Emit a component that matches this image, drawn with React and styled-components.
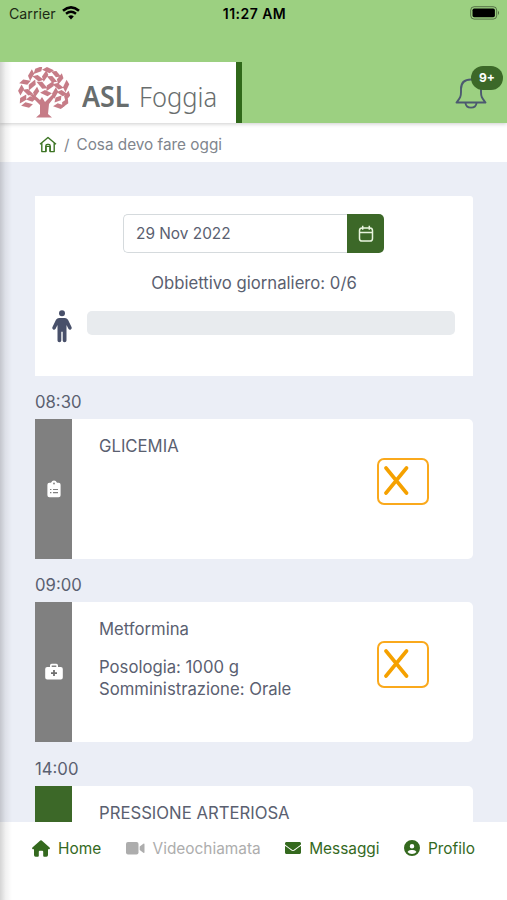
import React from "react";
import styled, { createGlobalStyle } from "styled-components";
import { FaEnvelope } from "react-icons/fa";
import { FaCircleUser } from "react-icons/fa6";

const tasks = [
  { time: "08:30", title: "GLICEMIA", icon: "clipboard", color: "#808080" },
  {
    time: "09:00",
    title: "Metformina",
    icon: "medical",
    color: "#808080",
    details: ["Posologia: 1000 g", "Somministrazione: Orale"],
  },
  { time: "14:00", title: "PRESSIONE ARTERIOSA", color: "#3c6828" },
];

// each leaf: x, y, rotation and length
const leaves = [
  [20, 3, -20, 11], [30, 3, 25, 11], [38, 7, 50, 10], [13, 8, -60, 11],
  [20, 11, 40, 11], [27, 9, -55, 11], [34, 12, 50, 11], [42, 12, -50, 11],
  [7, 15, 10, 11], [14, 18, -40, 12], [24, 18, 50, 12], [32, 19, -35, 12],
  [40, 19, 40, 11], [48, 19, -65, 12], [3, 23, -60, 10], [10, 25, 45, 11],
  [18, 25, -55, 10], [28, 26, 25, 11], [37, 26, -60, 11], [44, 26, 35, 10],
  [49, 29, -50, 10], [5, 32, -30, 10], [13, 32, 20, 9], [40, 32, -20, 9],
  [47, 36, -35, 10], [9, 38, 15, 11], [41, 39, 20, 11],
];

const Tree = () => (
  <svg width="52" height="51" viewBox="0 0 52 51" fill="#c67c87">
    {leaves.map(([x, y, angle, size], i) => (
      <path
        key={i}
        transform={`translate(${x} ${y}) rotate(${angle})`}
        d={`M${-size / 2} 2.2L${-size / 5} -2.2H${size / 2}L${size / 4} 2.2Z`}
      />
    ))}
    <path d="M18 50.5l4-3.5V38L12 28l3-1 7 6 2-3 3 5 8-8 3 1-7 9-1 10 4 3.5Z" />
  </svg>
);

const Wifi = () => (
  <svg width="18" height="14" viewBox="0 0 18 14" fill="none" stroke="#000">
    <path d="M1 4.8Q9-2.1 17 4.8" strokeWidth="2.6" />
    <path d="M4 7.8Q9 3.7 14 7.8" strokeWidth="2.4" />
    <path d="M9 13.5L6.2 10.5Q9 8.2 11.8 10.5Z" fill="#000" stroke="none" />
  </svg>
);

const Battery = () => (
  <svg width="30" height="14" viewBox="0 0 30 14">
    <rect x=".7" y=".7" width="26" height="12.4" rx="3.5" fill="none" stroke="#000" strokeOpacity=".45" />
    <rect x="2.5" y="2.5" width="22.4" height="8.8" rx="1.7" />
    <path d="M28 4.7q2 2 0 4.4Z" fillOpacity=".5" />
  </svg>
);

const Bell = () => (
  <svg width="32" height="32" viewBox="0 0 32 32" fill="none" stroke="#4c5970" strokeWidth="1.9">
    <path d="M1.5 25.5C5 21 6 20 6 15v-3C6 6 9.5 2.5 16 2.5S26 6 26 12v3c0 5 1 6 4.5 10.5Z" strokeLinejoin="round" />
    <path d="M10.5 26c.6 6.2 10.4 6.2 11 0" />
  </svg>
);

const HouseOutline = () => (
  <svg width="18" height="17" viewBox="0 0 18 17" fill="none" stroke="#3c7424" strokeWidth="1.4">
    <path d="M1 8.3L9 1.5l8 6.8M2.8 7v8.6h4.1v-5.2h4.2v5.2h4.1V7" strokeLinejoin="round" />
    <path d="M6.9 15.6V9.7q0-1.3 1.3-1.3h1.6q1.3 0 1.3 1.3v5.9" />
  </svg>
);

const Calendar = () => (
  <svg width="16" height="18" viewBox="0 0 16 18" fill="none" stroke="#e9f5df" strokeWidth="1.5">
    <rect x="1.5" y="3" width="13" height="13" rx="2.6" />
    <path d="M1.5 7.6h13M4.7 .8v4M11.3 .8v4" />
  </svg>
);

const Person = () => (
  <svg width="20" height="33" viewBox="0 0 20 33" fill="#48506a">
    <circle cx="10" cy="3.2" r="3" />
    <path d="M7 8h6q1.8 0 3 1.8l3.5 7.3q.7 1.700-.7 2.400-1.500.6-2.400-.8L14.500 15v15.600q0 1.700-1.900 1.700t-1.900-1.700V21.800H9.300v8.800q0 1.700-1.900 1.700t-1.900-1.700V15l-1.900 3.700q-.9 1.400-2.400.8-1.400-.7-.7-2.400L4 9.800Q5.200 8 7 8Z" />
  </svg>
);

const Clipboard = () => (
  <svg width="14" height="18" viewBox="0 0 14 18">
    <path d="M2.4 2.7H4Q5 .4 7 .4t3 2.3h1.6Q13.6 2.7 13.6 4.7v10.6q0 2-2 2H2.4q-2 0-2-2V4.7q0-2 2-2Z" fill="#fff" />
    <circle cx="7" cy="3.5" r=".9" fill="#808080" />
    <path d="M3 9.5h1.4M6 9.5h5M3 12.7h1.4M6 12.7h5" stroke="#808080" strokeWidth="1.2" />
  </svg>
);

const MedicalBag = () => (
  <svg width="18" height="18" viewBox="0 0 18 18">
    <path d="M5 4V2.4Q5 .7 6.7.7h4.6Q13 .7 13 2.4V4h2.8q2 0 2 2v8.5q0 2-2 2H2.2q-2 0-2-2V6q0-2 2-2ZM6.7 4h4.6V2.4H6.7Z" fill="#fff" fillRule="evenodd" />
    <path d="M9 7.1v6M6 10.1h6" stroke="#707070" strokeWidth="1.8" />
  </svg>
);

const Cross = () => (
  <svg width="25" height="29" viewBox="0 0 25 29" fill="none" stroke="#f5a100" strokeWidth="3.6" strokeLinecap="round">
    <path d="M2 2l20.5 25M22.5 2L2 27" />
  </svg>
);

const House = () => (
  <svg width="18" height="17" viewBox="0 0 18 17" fill="currentColor">
    <path d="M8.3.6q.7-.6 1.4 0l7.9 7q.8 1.3-.6 1.6h-1v5.9q0 1.6-1.6 1.6h-2.3q-.9 0-.9-.9v-4.1q0-.9-.9-.9H7.7q-.9 0-.9.9v4.1q0 .9-.9.9H3.6Q2 16.7 2 15.1V9.2H1Q-.4 8.9.4 7.6Z" />
  </svg>
);

const Camera = () => (
  <svg width="19" height="13" viewBox="0 0 19 13" fill="currentColor">
    <rect width="12.5" height="12.5" rx="2" />
    <path d="M13.7 4.5l3.6-2.8q1.2-.6 1.2.7v7.7q0 1.3-1.2.7l-3.6-2.8Z" />
  </svg>
);

const App = () => {
  return (
    <Wrapper>
      <GlobalStyle />
      <Header>
        <StatusBar>
          <Carrier>
            Carrier <Wifi />
          </Carrier>
          <Clock>11:27 AM</Clock>
          <Power>
            <Battery />
          </Power>
        </StatusBar>
        <TopBar>
          <Logo>
            <Tree />
            <Brand>
              <BrandBold>ASL</BrandBold>
              <BrandLight>Foggia</BrandLight>
            </Brand>
          </Logo>
          <Notifications>
            <Bell />
            <Badge>9+</Badge>
          </Notifications>
        </TopBar>
      </Header>
      <Breadcrumb>
        <HouseOutline />
        <span>/</span>
        <span>Cosa devo fare oggi</span>
      </Breadcrumb>
      <Main>
        <Summary>
          <DatePicker>
            <DateValue>29 Nov 2022</DateValue>
            <DateButton>
              <Calendar />
            </DateButton>
          </DatePicker>
          <Goal>Obbiettivo giornaliero: 0/6</Goal>
          <ProgressRow>
            <Person />
            <Progress />
          </ProgressRow>
        </Summary>
        {tasks.map(({ time, title, icon, color, details }) => (
          <Task key={time}>
            <Time>{time}</Time>
            <Card>
              <Stripe $color={color}>
                {icon === "clipboard" && <Clipboard />}
                {icon === "medical" && <MedicalBag />}
              </Stripe>
              <Info>
                <div>{title}</div>
                {details && (
                  <Details>
                    {details.map((line) => (
                      <div key={line}>{line}</div>
                    ))}
                  </Details>
                )}
              </Info>
              <CheckBox>
                <Cross />
              </CheckBox>
            </Card>
          </Task>
        ))}
      </Main>
      <Footer>
        <NavItem>
          <House />
          Home
        </NavItem>
        <NavItem $disabled>
          <Camera />
          Videochiamata
        </NavItem>
        <NavItem>
          <FaEnvelope size={16} />
          Messaggi
        </NavItem>
        <NavItem>
          <FaCircleUser size={16} />
          Profilo
        </NavItem>
      </Footer>
      <EdgeShadow />
    </Wrapper>
  );
};

const GlobalStyle = createGlobalStyle`
  * {
    box-sizing: border-box;
  }
  body {
    margin: 0;
    font-family: Inter, "Liberation Sans", sans-serif;
  }
  svg {
    flex-shrink: 0;
  }
`;

const Wrapper = styled.div`
  position: relative;
  display: flex;
  flex-direction: column;
  width: 507px;
  height: 900px;
  overflow: hidden;
  background: #ebeef6;
  color: #5a6070;
  font-size: 16.7px;
`;

const Header = styled.header`
  z-index: 1;
  height: 123px;
  flex-shrink: 0;
  background: #9cd081;
  box-shadow: 0 1px 4px rgba(0, 0, 0, 0.2);
`;

const StatusBar = styled.div`
  display: grid;
  grid-template-columns: 1fr auto 1fr;
  align-items: center;
  height: 62px;
  padding: 0 7px 36px 9px;
  color: #000;
`;

const Carrier = styled.div`
  display: flex;
  align-items: center;
  gap: 6px;
  font-size: 14.2px;
  color: #1c2b15;
`;

const Clock = styled.div`
  font-size: 14px;
  font-weight: 600;
  letter-spacing: 0.45px;
`;

const Power = styled.div`
  display: flex;
  justify-content: flex-end;
`;

const TopBar = styled.div`
  display: flex;
  justify-content: space-between;
  height: 61px;
`;

const Logo = styled.div`
  display: flex;
  align-items: center;
  gap: 12px;
  width: 242px;
  padding-left: 18px;
  background: #fff;
  border-right: 6px solid #30681a;
`;

const Brand = styled.div`
  display: flex;
  gap: 9px;
  padding-top: 6px;
  color: #686d6d;
  font-family: "Noto Sans", sans-serif;
  font-size: 28px;
  line-height: 40px;
`;

const BrandBold = styled.span`
  width: 48px;
  font-weight: 600;
  transform: scaleX(0.96);
  transform-origin: left;
`;

const BrandLight = styled.span`
  font-weight: 300;
  transform: scaleX(0.91);
  transform-origin: left;
`;

const Notifications = styled.div`
  position: relative;
  padding: 15px 20px 0 0;
`;

const Badge = styled.div`
  position: absolute;
  top: 4px;
  right: 4px;
  width: 32px;
  height: 24px;
  border-radius: 12px;
  background: #3c6828;
  color: #fff;
  font-size: 12px;
  font-weight: 700;
  line-height: 24px;
  text-align: center;
`;

const Breadcrumb = styled.nav`
  display: flex;
  align-items: center;
  gap: 7px;
  height: 39px;
  flex-shrink: 0;
  padding: 3px 0 0 39px;
  background: #fff;
  color: #80858d;
  font-size: 15.3px;
`;

const Main = styled.main`
  flex: 1;
  min-height: 0;
  overflow: hidden;
  padding: 34px 34px 0 35px;
`;

const Summary = styled.section`
  display: flex;
  flex-direction: column;
  align-items: center;
  height: 180px;
  padding-top: 18px;
  background: #fff;
  border-radius: 0 3px 0 0;
`;

const DatePicker = styled.div`
  display: flex;
  width: 261px;
  height: 39px;
  margin-right: 1px;
`;

const DateValue = styled.div`
  flex: 1;
  padding-left: 12px;
  border: 1px solid #d5dadd;
  border-right: none;
  border-radius: 5px 0 0 5px;
  font-size: 15.4px;
  line-height: 37px;
`;

const DateButton = styled.div`
  display: flex;
  align-items: center;
  justify-content: center;
  width: 37px;
  border-radius: 0 5px 5px 0;
  background: #3c6828;
`;

const Goal = styled.div`
  margin-top: 19px;
  line-height: 22px;
`;

const ProgressRow = styled.div`
  display: flex;
  gap: 15px;
  align-self: stretch;
  margin-top: 16px;
  padding: 0 18px 0 17px;
`;

const Progress = styled.div`
  flex: 1;
  height: 24px;
  margin-top: 1px;
  border-radius: 5px;
  background: #e8ebee;
`;

const Task = styled.section`
  margin-bottom: 0.4px;
`;

const Time = styled.div`
  height: 43px;
  padding-top: 15px;
  line-height: 22px;
`;

const Card = styled.div`
  display: flex;
  height: 140px;
  background: #fff;
  border-radius: 0 5px 5px 0;
`;

const Stripe = styled.div`
  display: flex;
  align-items: center;
  justify-content: center;
  width: 37px;
  background: ${({ $color }) => $color};
`;

const Info = styled.div`
  flex: 1;
  padding: 16px 0 0 27px;
  line-height: 22px;
`;

const Details = styled.div`
  margin-top: 16px;
`;

const CheckBox = styled.div`
  width: 52px;
  height: 47px;
  margin: 39px 44px 0 0;
  padding: 6px 0 0 5px;
  border: 2px solid #faa91c;
  border-radius: 7px;
`;

const Footer = styled.footer`
  display: flex;
  justify-content: space-between;
  height: 78px;
  flex-shrink: 0;
  padding: 14px 32px 0;
  background: #fff;
`;

const NavItem = styled.div`
  display: flex;
  align-items: center;
  gap: 8px;
  height: 24px;
  color: ${({ $disabled }) => ($disabled ? "#adadad" : "#34691e")};
  font-size: 15.4px;
`;

const EdgeShadow = styled.div`
  position: absolute;
  z-index: 2;
  top: 62px;
  bottom: 0;
  left: 0;
  width: 12px;
  background: linear-gradient(
    to right,
    rgba(0, 0, 0, 0.17),
    rgba(0, 0, 0, 0.06) 45%,
    transparent
  );
`;

export default App;
